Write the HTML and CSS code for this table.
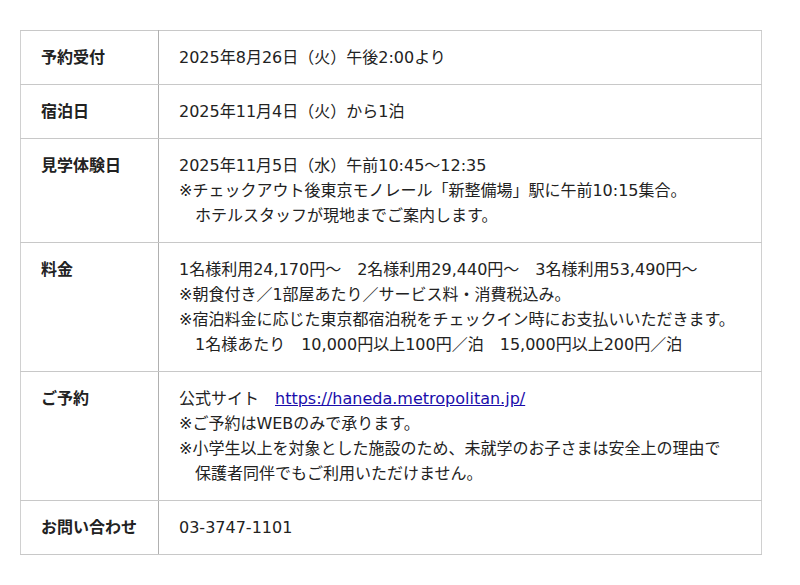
FILE: index.html
```html
<!DOCTYPE html>
<html lang="ja">
<head>
<meta charset="utf-8">
<title>ご案内</title>
<link rel="stylesheet" href="styles.css">
</head>
<body>
<table class="info">
  <tr>
    <th>予約受付</th>
    <td>2025年8月26日（火）午後2:00より</td>
  </tr>
  <tr>
    <th>宿泊日</th>
    <td>2025年11月4日（火）から1泊</td>
  </tr>
  <tr>
    <th>見学体験日</th>
    <td>2025年11月5日（水）午前10:45～12:35<br>※チェックアウト後東京モノレール「新整備場」駅に午前10:15集合。<br>　ホテルスタッフが現地までご案内します。</td>
  </tr>
  <tr>
    <th>料金</th>
    <td>1名様利用24,170円～　2名様利用29,440円～　3名様利用53,490円～<br>※朝食付き／1部屋あたり／サービス料・消費税込み。<br>※宿泊料金に応じた東京都宿泊税をチェックイン時にお支払いいただきます。<br>　1名様あたり　10,000円以上100円／泊　15,000円以上200円／泊</td>
  </tr>
  <tr>
    <th>ご予約</th>
    <td>公式サイト　<a href="#">https://haneda.metropolitan.jp/</a><br>※ご予約はWEBのみで承ります。<br>※小学生以上を対象とした施設のため、未就学のお子さまは安全上の理由で<br>　保護者同伴でもご利用いただけません。</td>
  </tr>
  <tr>
    <th>お問い合わせ</th>
    <td>03-3747-1101</td>
  </tr>
</table>
</body>
</html>
```
FILE: styles.css
```css
html, body {
  margin: 0;
  background: #fff;
}
body {
  padding: 30px 20px;
  font-family: "DejaVu Sans", "Noto Sans CJK JP", sans-serif;
  font-size: 16px;
  color: #222;
}
.info {
  width: 742px;
  border-collapse: collapse;
  border: 1px solid #d0d0d0;
}
.info th,
.info td {
  border-top: 1px solid #c8c8c8;
  border-bottom: 1px solid #c8c8c8;
  padding: 14px 20px;
  line-height: 25px;
  text-align: left;
  vertical-align: top;
}
.info th {
  width: 97px;
  font-weight: bold;
  border-right: 1px solid #b0b0b0;
  white-space: nowrap;
}
.info td {
  font-weight: normal;
}
.info a {
  color: #1a0dab;
  text-decoration: underline;
}
```
